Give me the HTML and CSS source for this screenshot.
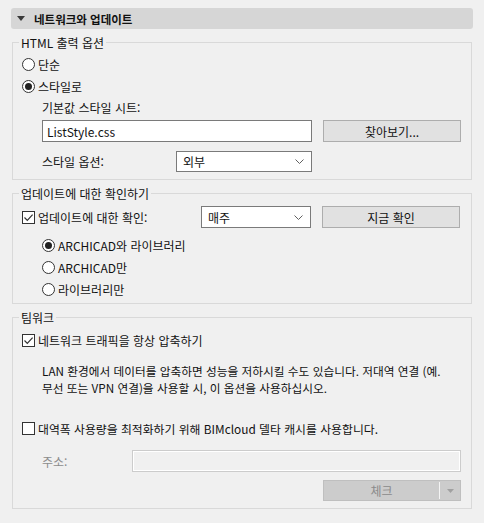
FILE: index.html
```html
<!DOCTYPE html>
<html lang="ko">
<head>
<meta charset="utf-8">
<link rel="stylesheet" href="styles.css">
</head>
<body>
<div class="panel">
  <div class="header">
    <svg class="tri" width="8" height="5" viewBox="0 0 8 5"><path d="M0 0h8L4 5z" fill="#3a3a3a"/></svg>
    <span class="header-title">네트워크와 업데이트</span>
  </div>

  <div class="group g1">
    <span class="legend">HTML 출력 옵션</span>
    <div class="row r22"><span class="radio"></span><span>단순</span></div>
    <div class="row r22"><span class="radio on"></span><span>스타일로</span></div>
    <div class="row r20 ind"><span>기본값 스타일 시트:</span></div>
    <div class="row r22 ind mt3">
      <div class="input w-file">ListStyle.css</div>
      <div class="button">찾아보기...</div>
    </div>
    <div class="row r21 ind mt9">
      <span class="lbl-opt">스타일 옵션:</span>
      <div class="select w-opt"><span>외부</span><svg class="chev" width="9" height="5" viewBox="0 0 9 5"><path d="M0.5 0.5L4.5 4.5L8.5 0.5" fill="none" stroke="#606060" stroke-width="1"/></svg></div>
    </div>
  </div>

  <div class="group g2">
    <span class="legend">업데이트에 대한 확인하기</span>
    <div class="row r22">
      <span class="check on"><svg width="11" height="11" viewBox="0 0 11 11"><path d="M1.5 5.5L4.3 8.3L9.6 2.6" fill="none" stroke="#333" stroke-width="1.2"/></svg></span>
      <span class="lbl-upd">업데이트에 대한 확인:</span>
      <div class="select w-upd"><span>매주</span><svg class="chev" width="9" height="5" viewBox="0 0 9 5"><path d="M0.5 0.5L4.5 4.5L8.5 0.5" fill="none" stroke="#606060" stroke-width="1"/></svg></div>
      <div class="button">지금 확인</div>
    </div>
    <div class="sub">
      <div class="row r22"><span class="radio on"></span><span>ARCHICAD와 라이브러리</span></div>
      <div class="row r22"><span class="radio"></span><span>ARCHICAD만</span></div>
      <div class="row r22"><span class="radio"></span><span>라이브러리만</span></div>
    </div>
  </div>

  <div class="group g3">
    <span class="legend">팀워크</span>
    <div class="row r22">
      <span class="check on"><svg width="11" height="11" viewBox="0 0 11 11"><path d="M1.5 5.5L4.3 8.3L9.6 2.6" fill="none" stroke="#333" stroke-width="1.2"/></svg></span>
      <span>네트워크 트래픽을 항상 압축하기</span>
    </div>
    <div class="desc">
      <span class="line">LAN 환경에서 데이터를 압축하면 성능을 저하시킬 수도 있습니다. 저대역 연결 (예.</span>
      <span class="line">무선 또는 VPN 연결)을 사용할 시, 이 옵션을 사용하십시오.</span>
    </div>
    <div class="row r22 mt21">
      <span class="check"></span>
      <span class="opt-text">대역폭 사용량을 최적화하기 위해 BIMcloud 델타 캐시를 사용합니다.</span>
    </div>
    <div class="row r22 ind mt11">
      <span class="lbl-addr disabled">주소:</span>
      <div class="input dis-input"></div>
    </div>
    <div class="row r21 mt8 end">
      <div class="button dis-btn">
        <span class="dis-label">체크</span>
        <span class="sep"></span>
        <svg class="dd" width="7" height="4" viewBox="0 0 7 4"><path d="M0 0h7L3.5 4z" fill="#a0a0a0"/></svg>
      </div>
    </div>
  </div>
</div>
</body>
</html>
```

FILE: styles.css
```css
* { box-sizing: border-box; }

html, body {
  margin: 0;
  padding: 0;
  background: #f0f0f0;
}

body {
  font-family: "Noto Sans CJK KR", "Noto Sans", sans-serif;
  font-size: 12px;
  color: #111;
  width: 484px;
  height: 523px;
  overflow: hidden;
}

.panel {
  padding: 8px 11px 0 11px;
  display: flex;
  flex-direction: column;
}

.header {
  height: 21px;
  width: 462px;
  background: #d6d6d6;
  border-radius: 3px;
  display: flex;
  align-items: center;
  padding-left: 6px;
}

.tri { margin-right: 9px; }

.header-title {
  font-weight: bold;
  font-size: 11.5px;
  color: #111;
}

.group {
  position: relative;
  margin-left: 1px;
  width: 460px;
  border: 1px solid #d9d9d9;
  padding-left: 9px;
  padding-right: 10px;
  display: flex;
  flex-direction: column;
}

.g1 { margin-top: 13px; padding-top: 10px; padding-bottom: 7px; }
.g2 { margin-top: 13px; padding-top: 12px; padding-bottom: 3px; }
.g3 { margin-top: 13px; padding-top: 11px; padding-bottom: 7px; }

.legend {
  position: absolute;
  top: -9px;
  left: 6px;
  padding: 0 2px;
  line-height: 17px;
  background: #f0f0f0;
}

.row {
  display: flex;
  align-items: center;
}
.r22 { height: 22px; }
.r21 { height: 21px; }
.r20 { height: 20px; }
.ind { padding-left: 20px; }
.mt3 { margin-top: 3px; }
.mt8 { margin-top: 8px; }
.mt9 { margin-top: 9px; }
.mt11 { margin-top: 11px; }
.mt21 { margin-top: 21px; }
.end { justify-content: flex-end; }

.radio {
  width: 13px;
  height: 13px;
  border: 1px solid #333;
  border-radius: 50%;
  background: #fff;
  margin-right: 3px;
  display: flex;
  align-items: center;
  justify-content: center;
  flex: none;
}
.radio.on::after {
  content: "";
  width: 7px;
  height: 7px;
  border-radius: 50%;
  background: #222;
}

.check {
  width: 13px;
  height: 13px;
  border: 1px solid #333;
  background: #fff;
  margin-right: 3px;
  display: flex;
  align-items: center;
  justify-content: center;
  flex: none;
}

.input {
  height: 22px;
  border: 1px solid #7a7a7a;
  background: #fff;
  display: flex;
  align-items: center;
  padding-left: 4px;
}
.w-file { width: 270px; margin-right: 11px; }

.button {
  width: 138px;
  height: 22px;
  background: #e1e1e1;
  border: 1px solid #adadad;
  display: flex;
  align-items: center;
  justify-content: center;
}

.select {
  height: 21px;
  border: 1px solid #7a7a7a;
  background: #fff;
  display: flex;
  align-items: center;
  justify-content: space-between;
  padding-left: 6px;
  padding-right: 7px;
}
.w-opt { width: 136px; }
.w-upd { width: 110px; height: 22px; margin-right: 11px; }
.lbl-opt { width: 134px; }
.lbl-upd { width: 163px; }

.sub { margin-top: 6px; padding-left: 20px; }

.desc {
  margin-top: 11px;
  padding-left: 20px;
  line-height: 17px;
  font-size: 11.7px;
}
.line { display: block; white-space: nowrap; }

.opt-text { font-size: 11.85px; }

.disabled { color: #8c8c8c; }
.lbl-addr { width: 90px; }
.dis-input {
  width: 330px;
  background: #f0f0f0;
  border: 1px solid #cccccc;
  box-shadow: inset 0 0 0 1px #ffffff;
}

.dis-btn {
  position: relative;
  height: 21px;
  background: #cccccc;
  border: 1px solid #bfbfbf;
  color: #8a8a8a;
  justify-content: flex-start;
}
.dis-label { width: 115px; text-align: center; }
.sep {
  width: 1px;
  height: 17px;
  background: #f4f4f4;
}
.dd { margin-left: 7px; }
```
